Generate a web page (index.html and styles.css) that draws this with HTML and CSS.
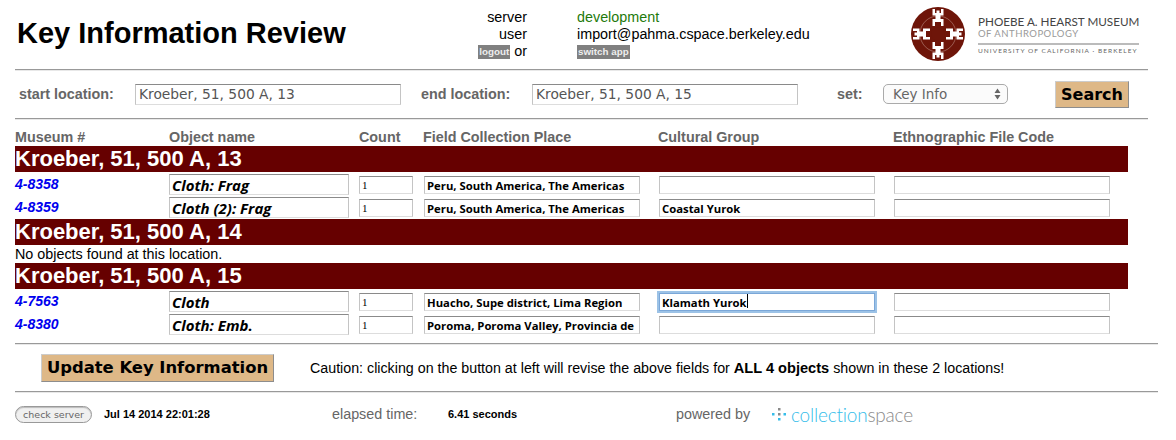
FILE: index.html
```html
<!DOCTYPE HTML>
<html>

<head>
    <title>Key Information Review</title>
    <link rel="stylesheet" href="styles.css">
</head>

<body>
    <div class="top">
        <h1 class="title">Key Information Review</h1>
        <div class="info">
            <div class="info-label">server</div>
            <div class="info-dev">development</div>
            <div class="info-label">user</div>
            <div>import@pahma.cspace.berkeley.edu</div>
            <div class="info-label"><a class="tiny-btn">logout</a> or</div>
            <div><a class="tiny-btn">switch app</a></div>
        </div>
        <div class="museum">
            <svg class="museum-seal" width="54" height="54" viewBox="-27 -27 54 54">
                <defs>
                    <path id="figure" d="M-5.500 -25H-3V-21H-1.500V-23.500H1.500V-21H3V-25H5.500V-18.500H2.500V-15H5.500V-8H3V-12H-3V-8H-5.500V-15H-2.500V-18.500H-5.500Z" />
                </defs>
                <circle r="27" fill="#6e1509" />
                <circle r="18" fill="none" stroke="#b98a80" stroke-width="0.600" />
                <g fill="#fff">
                    <use href="#figure" />
                    <use href="#figure" transform="rotate(90)" />
                    <use href="#figure" transform="rotate(180)" />
                    <use href="#figure" transform="rotate(270)" />
                </g>
                <circle r="7" fill="#6e1509" />
            </svg>
            <div class="museum-name">
                <div class="museum-line1">PHOEBE A. HEARST MUSEUM</div>
                <div class="museum-line2">OF ANTHROPOLOGY</div>
                <div class="museum-line3">UNIVERSITY OF CALIFORNIA · BERKELEY</div>
            </div>
        </div>
    </div>
    <hr class="rule">

    <form class="search">
        <label class="search-label start-label">start location:</label>
        <input class="search-input" value="Kroeber, 51, 500 A, 13">
        <label class="search-label end-label">end location:</label>
        <input class="search-input" value="Kroeber, 51, 500 A, 15">
        <label class="search-label set-label">set:</label>
        <div class="select-wrap">
            <select class="set-select">
                <option>Key Info</option>
            </select>
            <svg class="select-arrows" width="7" height="12" viewBox="0 0 7 12">
                <path d="M3.500 0.500L6.500 5H0.500ZM3.500 11.500L0.500 7H6.500Z" fill="#666" />
            </svg>
        </div>
        <button type="button" class="tan-btn search-btn">Search</button>
    </form>
    <hr class="rule">

    <table class="results">
        <colgroup>
            <col class="col-num">
            <col class="col-name">
            <col class="col-count">
            <col class="col-wide">
            <col class="col-wide">
            <col class="col-last">
        </colgroup>
        <tr class="head">
            <th>Museum #</th>
            <th>Object name</th>
            <th>Count</th>
            <th>Field Collection Place</th>
            <th>Cultural Group</th>
            <th>Ethnographic File Code</th>
        </tr>
        <tr>
            <td colspan="6" class="band">Kroeber, 51, 500 A, 13</td>
        </tr>
        <tr class="item">
            <td><a class="num" href="#">4-8358</a></td>
            <td><input class="f-name" value="Cloth: Frag"></td>
            <td><input class="f-count" value="1"></td>
            <td><input class="f-text" value="Peru, South America, The Americas"></td>
            <td><input class="f-text" value=""></td>
            <td><input class="f-text" value=""></td>
        </tr>
        <tr class="item item-last">
            <td><a class="num" href="#">4-8359</a></td>
            <td><input class="f-name" value="Cloth (2): Frag"></td>
            <td><input class="f-count" value="1"></td>
            <td><input class="f-text" value="Peru, South America, The Americas"></td>
            <td><input class="f-text" value="Coastal Yurok"></td>
            <td><input class="f-text" value=""></td>
        </tr>
        <tr>
            <td colspan="6" class="band">Kroeber, 51, 500 A, 14</td>
        </tr>
        <tr>
            <td colspan="6" class="none">No objects found at this location.</td>
        </tr>
        <tr>
            <td colspan="6" class="band">Kroeber, 51, 500 A, 15</td>
        </tr>
        <tr class="item">
            <td><a class="num" href="#">4-7563</a></td>
            <td><input class="f-name" value="Cloth"></td>
            <td><input class="f-count" value="1"></td>
            <td><input class="f-text" value="Huacho, Supe district, Lima Region"></td>
            <td class="caret-cell"><input class="f-text focused" value="Klamath Yurok"><span class="caret"></span></td>
            <td><input class="f-text" value=""></td>
        </tr>
        <tr class="item item-last">
            <td><a class="num" href="#">4-8380</a></td>
            <td><input class="f-name" value="Cloth: Emb."></td>
            <td><input class="f-count" value="1"></td>
            <td><input class="f-text" value="Poroma, Poroma Valley, Provincia de Nazca"></td>
            <td><input class="f-text" value=""></td>
            <td><input class="f-text" value=""></td>
        </tr>
    </table>
    <hr class="rule rule-long update-rule">

    <div class="update">
        <button type="button" class="tan-btn update-btn">Update Key Information</button>
        <p class="caution">Caution: clicking on the button at left will revise the above fields for <b>ALL 4 objects</b> shown in these 2 locations!</p>
    </div>
    <hr class="rule rule-long">

    <div class="foot">
        <button type="button" class="check-btn">check server</button>
        <span class="stamp date">Jul 14 2014 22:01:28</span>
        <span class="foot-label elapsed">elapsed time:</span>
        <span class="stamp seconds">6.41 seconds</span>
        <span class="foot-label powered">powered by</span>
        <svg class="cs-dots" width="15" height="15" viewBox="0 0 15 15">
            <g fill="#35bdea">
                <rect x="0" y="6" width="2.500" height="2.500" />
                <rect x="11.500" y="6" width="2.500" height="2.500" />
                <rect x="6" y="11" width="2.500" height="2.500" />
            </g>
            <g fill="#8a8a8a">
                <rect x="6" y="1" width="2.500" height="2.500" />
                <rect x="6" y="6" width="2.500" height="2.500" />
            </g>
        </svg>
        <span class="cs-name"><span class="cs-blue">collection</span>space</span>
    </div>
</body>

</html>
```

FILE: styles.css
```css
body {
    margin: 0;
    padding: 0 0 0 15px;
    font-family: "Liberation Sans", Arial, sans-serif;
    font-size: 14.350px;
    color: #000;
    background: #fff;
}

.rule {
    width: 1133px;
    height: 1px;
    margin: 0;
    border: 0;
    background: #999;
    box-shadow: 0 1px 0 #e8e8e8;
}

.rule-long {
    width: 1143px;
}

/* top */
.top {
    display: flex;
    height: 69px;
}

.title {
    width: 360px;
    margin: 15px 0 0 2px;
    font-size: 29px;
    line-height: 36px;
}

.info {
    display: grid;
    grid-template-columns: 150px 280px;
    grid-auto-rows: 17px;
    column-gap: 50px;
    align-content: start;
    width: 480px;
    margin-top: 9px;
    line-height: 17px;
}

.info-label {
    text-align: right;
}

.info-dev {
    color: #1f7a0c;
}

.tiny-btn {
    display: inline-block;
    padding: 0 1px;
    height: 14px;
    line-height: 14px;
    background: #808080;
    color: #eee;
    font-size: 9.800px;
    font-weight: bold;
    vertical-align: middle;
}

.museum {
    display: flex;
    margin-left: 54px;
    padding-top: 7px;
}

.museum-seal {
    flex: none;
}

.museum-name {
    width: 161px;
    margin-left: 13px;
    padding-top: 7px;
    font-family: Lato, sans-serif;
}

.museum-line1 {
    font-size: 11.700px;
    line-height: 14px;
    color: #444;
    white-space: nowrap;
}

.museum-line2 {
    height: 15px;
    border-bottom: 2px solid #bbb;
    font-size: 9.500px;
    line-height: 12px;
    letter-spacing: 0.500px;
    color: #999;
    white-space: nowrap;
}

.museum-line3 {
    margin-top: 1px;
    font-size: 6.500px;
    line-height: 10px;
    letter-spacing: 1.050px;
    color: #666;
    white-space: nowrap;
}

/* search row */
.search {
    display: flex;
    align-items: center;
    height: 48px;
    padding-left: 4px;
}

.search-label {
    color: #666;
    font-weight: bold;
}

.start-label {
    width: 116px;
}

.end-label {
    width: 111px;
    margin-left: 20px;
}

.set-label {
    width: 46px;
    margin-left: 39px;
}

.search-input {
    box-sizing: border-box;
    width: 266px;
    height: 21px;
    padding: 0 3px;
    border: 1px solid #c4c4c4;
    border-top-color: #8a8a8a;
    border-bottom-color: #ddd;
    border-radius: 0;
    outline: 0;
    font-family: "DejaVu Sans", sans-serif;
    font-size: 13.800px;
    color: #555;
}

.select-wrap {
    position: relative;
    width: 125px;
    height: 20px;
}

.set-select {
    appearance: none;
    width: 100%;
    height: 100%;
    padding: 0 0 0 9px;
    border: 1px solid #aaa;
    border-radius: 5px;
    background: #fbfbfb;
    font-family: "DejaVu Sans", sans-serif;
    font-size: 13.500px;
    color: #666;
}

.select-arrows {
    position: absolute;
    top: 4px;
    right: 7px;
}

.tan-btn {
    border: 1px solid #8d8d8d;
    border-top-color: #ccc;
    border-left-color: #ccc;
    background: #deb887;
    color: #000;
    font-family: "DejaVu Sans", sans-serif;
    font-weight: bold;
    padding: 0;
}

.search-btn {
    width: 74px;
    height: 27px;
    margin-left: 47px;
    font-size: 16px;
}

/* results */
.results {
    width: 1113px;
    table-layout: fixed;
    border-collapse: collapse;
    margin-top: 9px;
}

.results td,
.results th {
    padding: 0;
}

.col-num {
    width: 154px;
}

.col-name {
    width: 190px;
}

.col-count {
    width: 65px;
}

.col-wide {
    width: 235px;
}

.col-last {
    width: 234px;
}

.head {
    height: 18px;
}

.head th {
    color: #666;
    font-weight: bold;
    text-align: left;
    font-size: 14.350px;
    line-height: 18px;
}

.head th:nth-child(n+4) {
    text-indent: -1px;
}

.band {
    height: 26px;
    background: #660000;
    color: #fff;
    font-size: 22px;
    font-weight: bold;
    line-height: 26px;
}

.none {
    height: 18px;
    line-height: 18px;
}

.item {
    height: 23px;
}

.item-last {
    height: 24px;
}

.item td {
    vertical-align: top;
    padding-top: 2px;
}

.num {
    display: block;
    color: #0000ee;
    font-size: 14px;
    font-style: italic;
    font-weight: bold;
    line-height: 20px;
    text-decoration: none;
}

.item input {
    display: block;
    box-sizing: border-box;
    margin: 0;
    padding: 0 2px;
    border: 1px solid #c4c4c4;
    border-top-color: #8a8a8a;
    border-bottom-color: #ddd;
    border-radius: 0;
    outline: 0;
    color: #000;
}

.item .f-name {
    width: 180px;
    height: 21px;
    font-family: "Open Sans", sans-serif;
    font-size: 15px;
    font-style: italic;
    font-weight: bold;
}

.item .f-count {
    width: 54px;
    height: 18px;
    margin-top: 2px;
    font-family: "Liberation Serif", serif;
    font-size: 11px;
}

.item .f-text {
    width: 216px;
    height: 18px;
    margin-top: 2px;
    font-family: "Open Sans", sans-serif;
    font-size: 11.300px;
    font-weight: bold;
}

.item .focused {
    border-color: #7aa7d8;
    box-shadow: 0 0 0 2px #9cc2e6;
}

.caret-cell {
    position: relative;
}

.caret {
    position: absolute;
    top: 5px;
    left: 88px;
    width: 1px;
    height: 14px;
    background: #000;
}

/* update */
.update-rule {
    margin-top: 7px;
}

.update {
    display: flex;
    align-items: center;
    height: 47px;
    padding-left: 26px;
}

.update-btn {
    width: 233px;
    height: 28px;
    font-size: 16.400px;
}

.caution {
    margin: 0 0 0 36px;
    font-size: 14.250px;
}

.caution b {
    font-size: 14.600px;
}

/* footer */
.foot {
    display: flex;
    align-items: center;
    height: 44px;
}

.check-btn {
    box-sizing: border-box;
    width: 77px;
    height: 17px;
    padding: 0;
    border: 1px solid #999;
    border-radius: 9px;
    background: #f0f0f0;
    box-shadow: inset 0 1px 1px #bbb;
    color: #666;
    font-family: "DejaVu Sans", sans-serif;
    font-size: 9.500px;
}

.stamp {
    font-size: 11px;
    font-weight: bold;
}

.foot-label {
    color: #666;
}

.date {
    width: 228px;
    margin-left: 12px;
}

.elapsed {
    width: 116px;
}

.seconds {
    width: 228px;
}

.powered {
    width: 96px;
}

.cs-dots {
    flex: none;
    margin-top: 1px;
    margin-right: 4px;
}

.cs-name {
    font-family: Lato, sans-serif;
    font-size: 19px;
    font-weight: 300;
    letter-spacing: -0.200px;
    color: #8a8a8a;
}

.cs-blue {
    color: #35bdea;
}
```
